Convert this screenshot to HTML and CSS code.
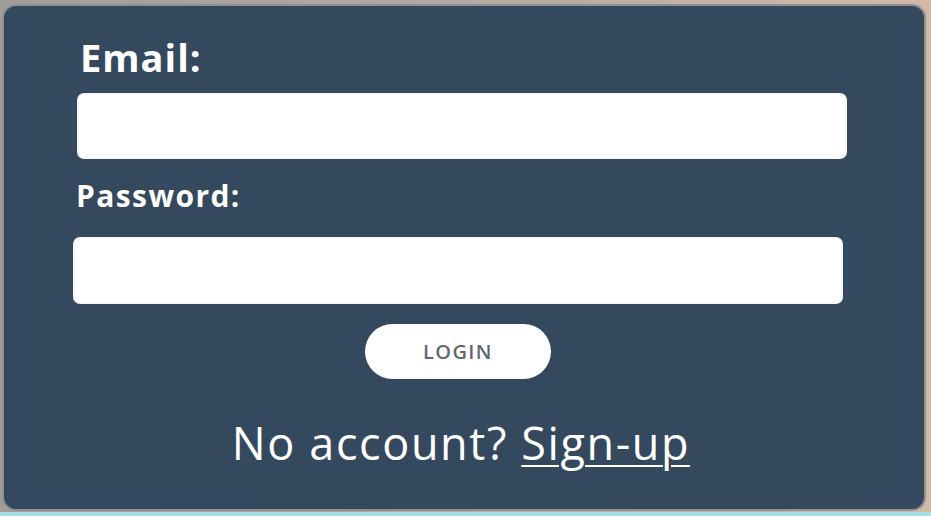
FILE: index.html
```html
<!DOCTYPE html>
<html lang="en">
<head>
<meta charset="utf-8">
<title>Login</title>
<link rel="stylesheet" href="styles.css">
</head>
<body>
<div class="frame">
  <form class="panel">
    <label class="label label-email" for="email">Email:</label>
    <input class="field" id="email" type="email">
    <label class="label label-password" for="password">Password:</label>
    <input class="field field-password" id="password" type="password">
    <button class="login" type="button">LOGIN</button>
    <p class="signup">No account? <a href="#" class="signup-link">Sign-up</a></p>
  </form>
</div>
<div class="strip"></div>
</body>
</html>
```

FILE: styles.css
```css
html, body {
  margin: 0;
  padding: 0;
  width: 931px;
  height: 516px;
  overflow: hidden;
}
body {
  background: linear-gradient(90deg, #a29c99 0%, #b4a9a2 50%, #d2b9a8 100%);
  font-family: "Open Sans", "Noto Sans", sans-serif;
  display: flex;
  flex-direction: column;
}
.frame {
  padding: 4px 5px 1px 2px;
  flex: 1;
  display: flex;
}
.panel {
  flex: 1;
  box-sizing: border-box;
  margin: 0;
  border: 2px solid #8e9297;
  border-radius: 14px;
  background: #34485e;
  padding: 32px 77px 0 71px;
  display: flex;
  flex-direction: column;
  align-items: stretch;
}
.label {
  color: #ffffff;
  font-weight: 700;
  line-height: 1;
}
.label-email {
  font-size: 38px;
  letter-spacing: 1px;
  margin-left: 5px;
}
.label-password {
  font-size: 30px;
  letter-spacing: 1.4px;
  margin-top: 22px;
  margin-left: 1px;
}
.field {
  display: block;
  height: 66px;
  border: none;
  border-radius: 7px;
  background: #ffffff;
  box-shadow: inset 0 0 2px rgba(120, 130, 140, 0.35);
  margin: 17px 0 0 2px;
  padding: 0;
}
.field-password {
  margin: 26px 4px 0 -2px;
  height: 67px;
}
.login {
  align-self: center;
  width: 186px;
  height: 55px;
  margin: 20px 6px 0 0;
  border: none;
  border-radius: 28px;
  background: #ffffff;
  color: #5f6873;
  font-family: "Open Sans", "Noto Sans", sans-serif;
  font-size: 20px;
  font-weight: 600;
  letter-spacing: 1.4px;
  padding: 0;
}
.signup {
  margin: 41px 0 0 0;
  text-align: center;
  color: #ffffff;
  font-size: 45px;
  line-height: 1;
  letter-spacing: 1.6px;
}
.signup-link {
  color: #ffffff;
  text-decoration: underline;
  text-decoration-thickness: 2px;
  text-underline-offset: 5px;
}
.strip {
  height: 4px;
  background: #a9dce5;
}
```
